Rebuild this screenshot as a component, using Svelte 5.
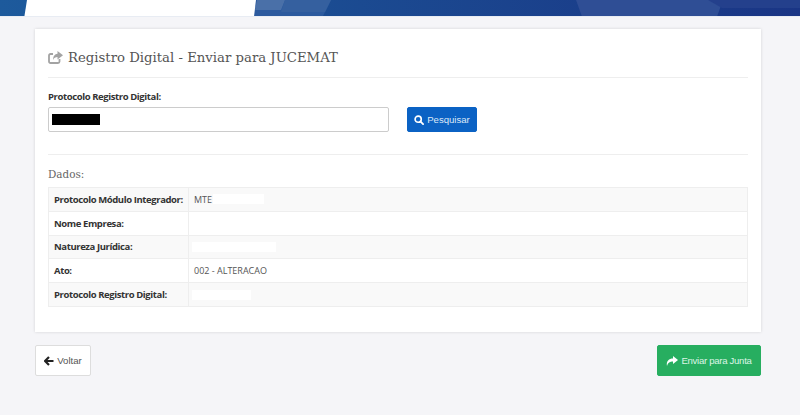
<script>
  const rows = [
    { label: 'Protocolo Módulo Integrador:', value: 'MTE', mask: 51 },
    { label: 'Nome Empresa:', value: '' },
    { label: 'Natureza Jurídica:', value: '', mask: 84, pull: true },
    { label: 'Ato:', value: '002 - ALTERACAO' },
    { label: 'Protocolo Registro Digital:', value: '', mask: 59, pull: true }
  ];
</script>

<header class="topbar">
  <svg width="800" height="16" viewBox="0 0 800 16" aria-hidden="true">
    <defs>
      <linearGradient id="bar" x1="0" x2="1" y1="0" y2="0">
        <stop offset="0" stop-color="#1d5a9c" />
        <stop offset="0.4" stop-color="#1b4c92" />
        <stop offset="1" stop-color="#1a3585" />
      </linearGradient>
    </defs>
    <rect width="800" height="16" fill="url(#bar)" />
    <polygon points="256,0 331,0 323,16 253,16" fill="#2c5a9e" />
    <polygon points="257,0 285,0 281,10 255,10" fill="#4a70a8" />
    <polygon points="285,0 331,0 325,12 281,12" fill="#35609f" />
    <polygon points="576,0 723,0 714,25 585,25" fill="#2f4e95" />
    <polygon points="708,0 800,0 800,8 722,8" fill="#24408c" />
    <polygon points="27,0 256,0 253,25 23,25" fill="#fff" />
  </svg>
</header>

<main class="page">
  <section class="card">
    <h1 class="title">
      <svg class="title-icon" width="15" height="13" viewBox="0 0 15 13" aria-hidden="true">
        <path d="M11.500 8v2.500a1.500 1.500 0 0 1-1.500 1.500H2.500A1.500 1.500 0 0 1 1 10.500V4.500A1.500 1.500 0 0 1 2.500 3H5" fill="none" stroke="#a3a3a3" stroke-width="1.800" />
        <path d="M9.500 0L15 4.200 9.500 8.400V6C7.500 6 5.800 6.700 5.200 9 4.800 5.500 6.800 3 9.500 2.700z" fill="#a3a3a3" />
      </svg>
      Registro Digital - Enviar para JUCEMAT
    </h1>

    <div class="search">
      <div class="field">
        <label for="protocolo">Protocolo Registro Digital:</label>
        <div id="protocolo" class="input"><span class="redacted"></span></div>
      </div>
      <button class="btn primary">
        <svg width="10" height="10" viewBox="0 0 11 11" aria-hidden="true">
          <circle cx="4.600" cy="4.600" r="3.400" fill="none" stroke="#fff" stroke-width="1.800" />
          <path d="M7 7l3 3" stroke="#fff" stroke-width="2" stroke-linecap="round" />
        </svg>
        Pesquisar
      </button>
    </div>

    <h2 class="subtitle">Dados:</h2>
    <div class="table">
      {#each rows as row}
        <div class="row">
          <div class="key">{row.label}</div>
          <div class="val">
            {row.value}
            {#if row.mask}<span class="mask" class:pull={row.pull} style="width: {row.mask}px"></span>{/if}
          </div>
        </div>
      {/each}
    </div>
  </section>

  <footer class="actions">
    <button class="btn ghost">
      <svg width="10" height="10" viewBox="0 0 10 10" aria-hidden="true">
        <path d="M5 1L1 5l4 4M1.500 5H9.500" fill="none" stroke="#222" stroke-width="2.200" />
      </svg>
      Voltar
    </button>
    <button class="btn success">
      <svg width="12" height="10" viewBox="0 0 12 10" aria-hidden="true">
        <path d="M7 0l5 4-5 4V5.500C4 5.500 2 6.500 1 10 0 5 3 2.500 7 2.500z" fill="#fff" />
      </svg>
      Enviar para Junta
    </button>
  </footer>
</main>

<style>
  :global(body) {
    background: #f5f5f8;
    font-family: "Open Sans", "Liberation Sans", sans-serif;
    color: #444;
  }

  .topbar {
    height: 16px;
    overflow: hidden;
    border-bottom: 1px solid #e8ecf3;
    line-height: 0;
  }

  .page {
    padding: 12px 39px 39px 35px;
  }

  .card {
    background: #fff;
    box-shadow: 0 0 3px rgba(0, 0, 0, 0.14);
    padding: 0 13px 26px;
    height: 303px;
    box-sizing: border-box;
  }

  .title {
    display: flex;
    align-items: center;
    gap: 5px;
    margin: 0;
    height: 49px;
    box-sizing: border-box;
    padding-top: 8px;
    border-bottom: 1px solid #eee;
    font-family: "DejaVu Serif", "Liberation Serif", serif;
    font-size: 13.250px;
    font-weight: 400;
    color: #555;
    white-space: nowrap;
  }

  .search {
    display: flex;
    align-items: flex-end;
    gap: 18px;
    padding: 12px 0 22px;
    border-bottom: 1px solid #eee;
  }

  .field {
    width: 341px;
  }

  label {
    display: block;
    font-size: 9.500px;
    letter-spacing: -0.4px;
    line-height: 14px;
    font-weight: 700;
    color: #333;
    margin-bottom: 3px;
  }

  .input {
    display: flex;
    align-items: center;
    height: 25px;
    box-sizing: border-box;
    border: 1px solid #ccc;
    border-radius: 2px;
    padding-left: 3px;
  }

  .redacted {
    display: block;
    width: 48px;
    height: 11px;
    background: #000;
  }

  .btn {
    display: inline-flex;
    align-items: center;
    justify-content: center;
    gap: 3px;
    box-sizing: border-box;
    border-radius: 2px;
    font-family: "Liberation Sans", Arial, sans-serif;
    font-size: 9.600px;
    padding: 0;
    white-space: nowrap;
  }

  .primary {
    width: 70px;
    height: 25px;
    background: #0b62c4;
    border: 1px solid #0b62c4;
    color: #dbe8f8;
  }

  .ghost {
    width: 56px;
    height: 31px;
    background: #fff;
    border: 1px solid #ddd;
    color: #555;
  }

  .success {
    width: 104px;
    height: 31px;
    background: #27ae60;
    border: 1px solid #27ae60;
    color: #dcf5e6;
    letter-spacing: -0.3px;
  }

  .subtitle {
    margin: 0;
    padding: 12px 0 5px;
    font-family: "DejaVu Serif", "Liberation Serif", serif;
    font-size: 10.400px;
    line-height: 15px;
    font-weight: 400;
    color: #666;
  }

  .table {
    border: 1px solid #eee;
    border-bottom: 0;
    font-size: 9px;
  }

  .row {
    display: grid;
    grid-template-columns: 140px 1fr;
    height: 23.800px;
    box-sizing: border-box;
    border-bottom: 1px solid #eee;
  }

  .row:nth-child(odd) {
    background: #f9f9f9;
  }

  .key {
    display: flex;
    align-items: center;
    padding-left: 5px;
    font-size: 9.500px;
    letter-spacing: -0.4px;
    font-weight: 700;
    color: #333;
    border-right: 1px solid #eee;
    white-space: nowrap;
  }

  .val {
    display: flex;
    align-items: center;
    gap: 1px;
    padding-left: 5px;
    color: #555;
  }

  .mask {
    display: block;
    height: 10px;
    background: #fff;
  }

  .mask.pull {
    margin-left: -2px;
  }

  .actions {
    display: flex;
    justify-content: space-between;
    margin-top: 13px;
  }
</style>
